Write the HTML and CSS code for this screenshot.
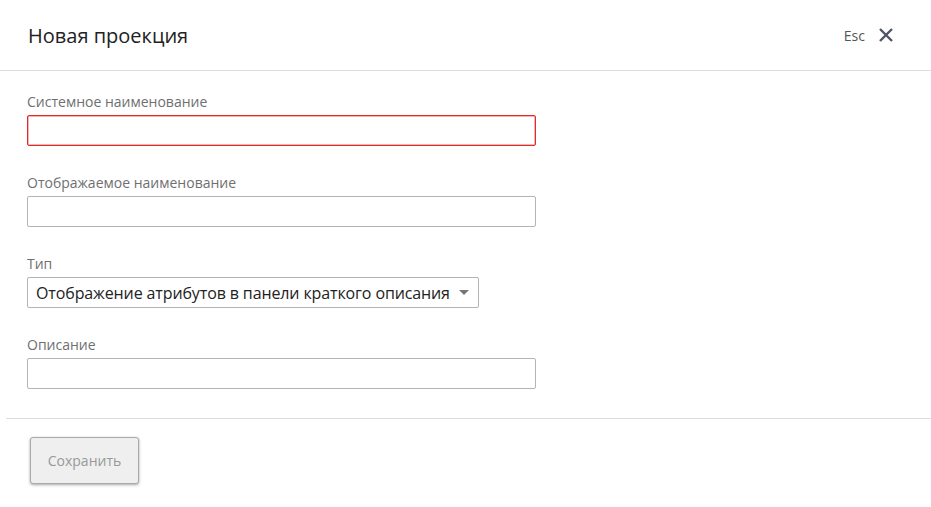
FILE: index.html
```html
<!DOCTYPE html>
<html lang="ru">
<head>
<meta charset="utf-8">
<title>Новая проекция</title>
<link rel="stylesheet" href="styles.css">
</head>
<body>
<div class="dialog">
  <header class="head">
    <h1 class="title">Новая проекция</h1>
    <div class="close">
      <span class="esc">Esc</span>
      <svg class="x" width="16" height="16" viewBox="0 0 16 16"><path d="M2 2L14 14M14 2L2 14" stroke="#4f5663" stroke-width="2.4" stroke-linecap="butt" fill="none"/></svg>
    </div>
  </header>
  <div class="form">
    <div class="group">
      <label class="label">Системное наименование</label>
      <div class="field field-invalid"></div>
    </div>
    <div class="group">
      <label class="label">Отображаемое наименование</label>
      <div class="field"></div>
    </div>
    <div class="group">
      <label class="label">Тип</label>
      <div class="select">
        <span class="select-text">Отображение атрибутов в панели краткого описания</span>
        <span class="caret"></span>
      </div>
    </div>
    <div class="group">
      <label class="label">Описание</label>
      <div class="field"></div>
    </div>
  </div>
  <div class="foot">
    <button class="btn">Сохранить</button>
  </div>
</div>
</body>
</html>
```
FILE: styles.css
```css
* { box-sizing: border-box; }
html, body { margin: 0; padding: 0; background: #fff; }
body { font-family: "Open Sans", "Noto Sans", sans-serif; color: #222; }
.dialog { width: 931px; height: 507px; }
.head {
  height: 71px;
  border-bottom: 1px solid #dedede;
  display: flex;
  align-items: center;
  justify-content: space-between;
  padding: 0 37px 0 28px;
}
.title { margin: 0; font-size: 20px; font-weight: 400; color: #222; }
.close { display: flex; align-items: center; gap: 13px; }
.esc { font-size: 14px; color: #555; }
.x { display: block; }
.form { padding: 21px 0 0 27px; }
.group { margin-bottom: 27px; }
.group:last-child { margin-bottom: 29px; }
.label { display: block; font-size: 14px; line-height: 20px; color: #6f6f6f; margin-bottom: 3px; }
.field { width: 509px; height: 31px; border: 1px solid #b4b4b4; border-radius: 2px; background: #fff; }
.field-invalid { border-color: rgb(226, 44, 44); box-shadow: inset 0 0 0 0.5px rgba(230, 40, 40, 0.7); }
.select {
  width: 452px; height: 31px; border: 1px solid #b4b4b4; border-radius: 2px;
  display: flex; align-items: center; justify-content: space-between;
  padding: 0 9px 0 8px;
}
.select-text { font-size: 16px; color: #222; letter-spacing: -0.12px; }
.caret { width: 0; height: 0; border-left: 5px solid transparent; border-right: 5px solid transparent; border-top: 5px solid #777; }
.foot { margin-left: 6px; border-top: 1px solid #dedede; padding: 18px 0 0 24px; }
.btn {
  width: 109px; height: 47px;
  background: #efefef; border: 1px solid #a9a9a9; border-radius: 3px;
  box-shadow: 0 1px 3px rgba(0,0,0,0.35);
  font-family: "Open Sans", "Noto Sans", sans-serif; font-size: 14px; color: #999;
}
```
